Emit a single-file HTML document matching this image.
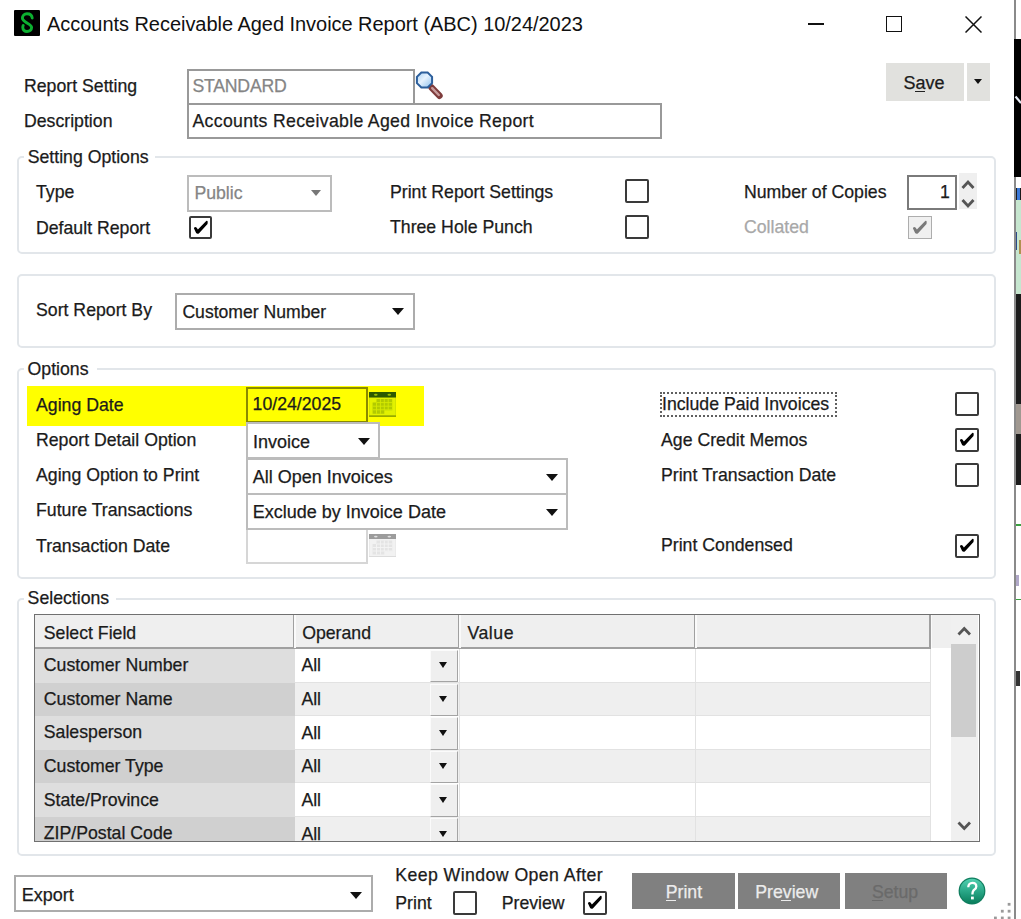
<!DOCTYPE html>
<html><head><meta charset="utf-8">
<style>
html,body{margin:0;padding:0;}
body{width:1021px;height:919px;position:relative;overflow:hidden;background:#fff;font-family:"Liberation Sans",sans-serif;}
.a{position:absolute;}
.t{position:absolute;font-size:17.7px;line-height:18px;white-space:nowrap;color:#1b1b1b;-webkit-text-stroke:0.25px currentColor;}
.g{position:absolute;border:2px solid #e2e6ea;border-radius:5px;box-sizing:border-box;}
.lg{position:absolute;background:#fff;height:20px;}
.cb{position:absolute;width:24px;height:24px;box-sizing:border-box;border:2px solid #3a3a3a;border-radius:2px;background:#fff;}
.cb svg{position:absolute;left:-2px;top:-2px;}
.box{position:absolute;box-sizing:border-box;border:2px solid #999;background:#fff;}
.cmb{position:absolute;box-sizing:border-box;border:2px solid #bcbcbc;background:#fff;}
.arr{position:absolute;width:0;height:0;border-left:6px solid transparent;border-right:6px solid transparent;border-top:7px solid #111;}
.btn{position:absolute;background:#808080;}
</style></head><body>

<!-- background window at right -->
<div class="a" style="left:1014px;top:0;width:7px;height:919px;background:#fff;"></div>
<div class="a" style="left:1014px;top:39px;width:7px;height:137.5px;background:#000;"></div>
<svg class="a" style="left:1014px;top:90px;" width="7" height="20" viewBox="0 0 7 20"><path d="M1.5,6.5 L7,13" stroke="#e8eef8" stroke-width="2.2"/></svg>
<div class="a" style="left:1015px;top:188px;width:6px;height:12px;background:#1a1a1a;"></div>
<div class="a" style="left:1016.5px;top:188px;width:3px;height:12px;background:#3a78d8;"></div>
<div class="a" style="left:1015px;top:200px;width:6px;height:94px;background:#c6e6cf;"></div>
<div class="a" style="left:1015px;top:232px;width:2px;height:18px;background:#2a4a8a;"></div>
<div class="a" style="left:1019px;top:240px;width:2px;height:14px;background:#b09050;"></div>
<div class="a" style="left:1015px;top:294px;width:6px;height:191px;background:#1c1c1c;"></div>
<div class="a" style="left:1015px;top:404px;width:6px;height:30px;background:#a09890;"></div>
<div class="a" style="left:1015px;top:524px;width:6px;height:1.5px;background:#3aa040;"></div><div class="a" style="left:1015px;top:575px;width:4px;height:11px;background:#b0a8c8;"></div>
<div class="a" style="left:1015px;top:598.5px;width:6px;height:1.5px;background:#3aa040;"></div>
<div class="a" style="left:1015px;top:671px;width:5px;height:15px;background:#333;"></div>
<div class="a" style="left:1014px;top:0;width:1.5px;height:39px;background:#8a8a8a;"></div><div class="a" style="left:1014px;top:176.5px;width:1.5px;height:742.5px;background:#8a8a8a;"></div>

<!-- title bar -->
<div class="a" style="left:14px;top:10px;width:26px;height:26px;background:#000;border-radius:1px;"></div>
<svg class="a" style="left:14px;top:10px;" width="26" height="26" viewBox="0 0 26 26"><path d="M18.2,8 C18,5.3 15.8,3.7 13,3.7 C10.3,3.7 8.4,5.6 8.4,8.1 C8.4,10.5 10.5,11.6 13,13 C16,14.6 17.6,15.8 17.6,17.6 C17.6,20 15.6,21.5 13,21.5 C10.5,21.5 8.8,19.8 8.8,17.6 C8.8,16.6 8.9,15.9 9.2,15.4" fill="none" stroke="#0cb030" stroke-width="2.9" stroke-linecap="round"/></svg>
<div class="t" style="left:47px;top:14px;font-size:20px;line-height:20px;color:#111;letter-spacing:-0.04px;-webkit-text-stroke:0;">Accounts Receivable Aged Invoice Report (ABC) 10/24/2023</div>
<div class="a" style="left:808px;top:23px;width:16px;height:1.5px;background:#111;"></div>
<div class="a" style="left:886px;top:16px;width:16px;height:16px;box-sizing:border-box;border:1.5px solid #111;"></div>
<svg class="a" style="left:965px;top:16px;" width="17" height="17" viewBox="0 0 17 17"><path d="M0.5,0.5 L16.5,16.5 M16.5,0.5 L0.5,16.5" stroke="#111" stroke-width="1.5"/></svg>

<!-- report setting -->
<div class="t" style="left:24px;top:76.6px;">Report Setting</div>
<div class="t" style="left:24px;top:112.1px;">Description</div>
<div class="box" style="left:187px;top:69px;width:228px;height:36px;"></div>
<div class="box" style="left:187px;top:103px;width:475px;height:36px;"></div>
<div class="t" style="left:192.5px;top:76.9px;color:#858585;letter-spacing:-0.25px;">STANDARD</div>
<div class="t" style="left:192.5px;top:112.4px;letter-spacing:0.31px;">Accounts Receivable Aged Invoice Report</div>
<svg class="a" style="left:414px;top:70px;" width="30" height="30" viewBox="0 0 30 30">
 <defs><linearGradient id="lens" x1="0" y1="0" x2="1" y2="1"><stop offset="0" stop-color="#a8d0f4"/><stop offset="0.45" stop-color="#e6f2fe"/><stop offset="1" stop-color="#8cc0ee"/></linearGradient></defs>
 <path d="M17.5,17.5 L25.5,25.8" stroke="#7e3c3c" stroke-width="6.4" stroke-linecap="round"/>
 <path d="M18.2,18.2 L24.8,25" stroke="#c89c9c" stroke-width="2.4" stroke-linecap="round"/>
 <polygon points="18.08,13.14 13.64,17.58 7.36,17.58 2.92,13.14 2.92,6.86 7.36,2.42 13.64,2.42 18.08,6.86" fill="url(#lens)" stroke="#2c5f9c" stroke-width="2"/>
</svg>

<!-- Save button -->
<div class="a" style="left:885.5px;top:62.5px;width:78px;height:38px;background:#e1e1de;"></div>
<div class="a" style="left:967px;top:62.5px;width:23px;height:38px;background:#e1e1de;"></div>
<div class="t" style="left:903.5px;top:73.5px;font-size:18px;color:#1b1b1b;">Save</div>
<div class="a" style="left:914.5px;top:90.5px;width:10.5px;height:1.5px;background:#222;"></div>
<div class="arr" style="left:973.5px;top:78.5px;border-left-width:4.7px;border-right-width:4.7px;border-top-width:5px;"></div>

<!-- Setting Options group -->
<div class="g" style="left:17px;top:156px;width:978.6px;height:98px;"></div>
<div class="lg" style="left:24px;top:146px;width:131px;"></div>
<div class="t" style="left:27.7px;top:147.5px;">Setting Options</div>
<div class="t" style="left:36px;top:182.7px;">Type</div>
<div class="t" style="left:36px;top:218.6px;">Default Report</div>
<div class="cmb" style="left:187px;top:175px;width:145px;height:37px;"></div>
<div class="t" style="left:194.4px;top:184.4px;color:#858585;">Public</div>
<div class="arr" style="left:310.5px;top:189.5px;border-top-color:#777;border-left-width:5.7px;border-right-width:5.7px;border-top-width:6.7px;"></div>
<div class="cb" style="left:189px;top:215.5px;width:23px;height:23px;"><svg width="24" height="24" viewBox="0 0 24 24"><path d="M4.9,12.2 Q5.9,10.4 7.5,11.6 L8.9,13.5 L17.2,4.9 Q18.7,4.4 18.7,6.1 L18.5,8 L10.3,16.9 Q8.6,18.7 7.1,17 Z" fill="#000"/></svg></div>
<div class="t" style="left:390px;top:182.9px;">Print Report Settings</div>
<div class="t" style="left:390px;top:217.9px;">Three Hole Punch</div>
<div class="cb" style="left:625px;top:179.4px;"></div>
<div class="cb" style="left:625px;top:215px;"></div>
<div class="t" style="left:744px;top:182.9px;">Number of Copies</div>
<div class="t" style="left:744px;top:217.9px;color:#a8a8a8;">Collated</div>
<div class="a" style="left:906.5px;top:174.5px;width:50.5px;height:35px;box-sizing:border-box;border:2px solid #7a7a7a;background:#fff;"></div>
<div class="t" style="left:940px;top:183px;">1</div>
<div class="a" style="left:959px;top:172.5px;width:18px;height:36px;background:#efefef;"></div>
<svg class="a" style="left:959px;top:172.5px;" width="18" height="36" viewBox="0 0 18 36"><path d="M3.5,15 L9,9 L14.5,15 M3.5,27 L9,33 L14.5,27" fill="none" stroke="#555" stroke-width="2.8"/></svg>
<div class="a" style="left:908px;top:215.5px;width:24px;height:23px;box-sizing:border-box;border:1.8px solid #adadad;background:#f0f0f0;"></div>
<svg class="a" style="left:908px;top:215.5px;" width="24" height="24" viewBox="0 0 24 24"><path d="M4.9,12.2 Q5.9,10.4 7.5,11.6 L8.9,13.5 L17.2,4.9 Q18.7,4.4 18.7,6.1 L18.5,8 L10.3,16.9 Q8.6,18.7 7.1,17 Z" fill="#7a7a7a"/></svg>

<!-- Sort group -->
<div class="g" style="left:17px;top:274px;width:978.6px;height:74px;"></div>
<div class="t" style="left:36px;top:301.2px;">Sort Report By</div>
<div class="cmb" style="left:174.5px;top:292.5px;width:240px;height:37px;border-color:#acacac;"></div>
<div class="t" style="left:182.4px;top:302.8px;font-size:17.6px;">Customer Number</div>
<div class="arr" style="left:392px;top:308px;"></div>

<!-- Options group -->
<div class="g" style="left:17px;top:368px;width:978.6px;height:211px;"></div>
<div class="lg" style="left:24px;top:359px;width:73px;"></div>
<div class="t" style="left:27.6px;top:359.6px;">Options</div>
<div class="a" style="left:27px;top:385.5px;width:397px;height:40px;background:#ffff00;"></div>
<div class="t" style="left:36px;top:395.5px;">Aging Date</div>
<div class="a" style="left:246px;top:387px;width:122px;height:36px;box-sizing:border-box;border:2px solid #8a8a00;"></div>
<div class="t" style="left:252.6px;top:395.3px;">10/24/2025</div>
<svg class="a" style="left:369px;top:392px;" width="27" height="25" viewBox="0 0 27 25">
 <rect x="0" y="0" width="27" height="25" fill="#cfe000"/>
 <rect x="0.8" y="5.5" width="25.4" height="18" fill="#e2f200"/>
 <rect x="0" y="0" width="27" height="5.5" fill="#2c5a00"/>
 <ellipse cx="6.8" cy="2.8" rx="1.8" ry="1" fill="#9ac000"/><ellipse cx="20.3" cy="2.8" rx="1.8" ry="1" fill="#9ac000"/>
 <path d="M7.5,7 H23.2 V18.2 H15.3 V21.8 H3.6 V10.6 H7.5 Z" fill="#b2ca00"/>
 <path d="M7.5,10.6 V21.8 M11.4,7 V21.8 M15.3,7 V18.2 M19.2,7 V18.2 M3.6,14.2 H23.2 M3.6,17.8 H23.2 M7.5,10.6 H23.2" stroke="#d6ea00" stroke-width="0.9"/>
 <rect x="0" y="23.3" width="27" height="1.7" fill="#98aa00"/>
</svg>
<div class="t" style="left:36px;top:430.8px;">Report Detail Option</div>
<div class="cmb" style="left:246px;top:421.5px;width:134px;height:37.5px;"></div>
<div class="t" style="left:253px;top:432.5px;font-size:18px;">Invoice</div>
<div class="arr" style="left:357.5px;top:437.5px;"></div>
<div class="t" style="left:36px;top:465.5px;">Aging Option to Print</div>
<div class="cmb" style="left:246px;top:457.5px;width:322px;height:37.5px;"></div>
<div class="t" style="left:252.8px;top:467.5px;font-size:18px;">All Open Invoices</div>
<div class="arr" style="left:545.5px;top:474px;"></div>
<div class="t" style="left:36px;top:501.3px;">Future Transactions</div>
<div class="cmb" style="left:246px;top:492.9px;width:322px;height:37.6px;"></div>
<div class="t" style="left:252.8px;top:502.8px;font-size:18px;">Exclude by Invoice Date</div>
<div class="arr" style="left:545.5px;top:509px;"></div>
<div class="t" style="left:36px;top:536.6px;">Transaction Date</div>
<div class="a" style="left:246px;top:530px;width:122px;height:34px;box-sizing:border-box;border:2px solid #d6d6d6;border-top:none;"></div>
<svg class="a" style="left:369px;top:533.5px;" width="27" height="23.5" viewBox="0 0 27 23.5">
 <rect x="0" y="0" width="27" height="23.5" fill="#e9e9e9"/>
 <rect x="0.8" y="5" width="25.4" height="17" fill="#f2f2f2"/>
 <rect x="0" y="0" width="27" height="5" fill="#9c9c9c"/>
 <ellipse cx="6.8" cy="2.6" rx="1.8" ry="0.9" fill="#e0e0e0"/><ellipse cx="20.3" cy="2.6" rx="1.8" ry="0.9" fill="#e0e0e0"/>
 <path d="M7.5,6.5 H23.2 V17.2 H15.3 V20.5 H3.6 V10 H7.5 Z" fill="#e4e4e4"/>
 <path d="M7.5,10 V20.5 M11.4,6.5 V20.5 M15.3,6.5 V17.2 M19.2,6.5 V17.2 M3.6,13.5 H23.2 M3.6,17 H23.2 M7.5,10 H23.2" stroke="#f4f4f4" stroke-width="0.9"/>
 <rect x="0" y="22" width="27" height="1.5" fill="#dcdcdc"/>
</svg>
<div class="a" style="left:659.5px;top:391.5px;width:177px;height:25px;box-sizing:border-box;border:2px dotted #606060;"></div>
<div class="t" style="left:662px;top:395.4px;">Include Paid Invoices</div>
<div class="t" style="left:661px;top:430.5px;">Age Credit Memos</div>
<div class="t" style="left:661px;top:465.7px;">Print Transaction Date</div>
<div class="t" style="left:661px;top:535.7px;">Print Condensed</div>
<div class="cb" style="left:955px;top:392px;"></div>
<div class="cb" style="left:955px;top:427.5px;"><svg width="24" height="24" viewBox="0 0 24 24"><path d="M4.9,12.2 Q5.9,10.4 7.5,11.6 L8.9,13.5 L17.2,4.9 Q18.7,4.4 18.7,6.1 L18.5,8 L10.3,16.9 Q8.6,18.7 7.1,17 Z" fill="#000"/></svg></div>
<div class="cb" style="left:955px;top:463px;"></div>
<div class="cb" style="left:955px;top:534px;"><svg width="24" height="24" viewBox="0 0 24 24"><path d="M4.9,12.2 Q5.9,10.4 7.5,11.6 L8.9,13.5 L17.2,4.9 Q18.7,4.4 18.7,6.1 L18.5,8 L10.3,16.9 Q8.6,18.7 7.1,17 Z" fill="#000"/></svg></div>

<!-- Selections group -->
<div class="g" style="left:17px;top:598px;width:978.6px;height:258px;"></div>
<div class="lg" style="left:24px;top:589px;width:92px;"></div>
<div class="t" style="left:27.6px;top:589px;">Selections</div>
<!--GRID-->
<div class="a" style="left:34px;top:614.4px;width:946.40px;height:227.60px;box-sizing:border-box;border:1.6px solid #707070;overflow:hidden;background:#fff;">
<div class="a" style="left:0.00px;top:0.00px;width:917.00px;height:33.00px;background:#efefef;"></div>
<div class="a" style="left:0.00px;top:32.00px;width:896.00px;height:1.60px;background:#a0a0a0;"></div>
<div class="a" style="left:257.50px;top:0.00px;width:1.50px;height:33.00px;background:#a0a0a0;"></div>
<div class="a" style="left:259.00px;top:0.00px;width:1.50px;height:33.00px;background:#fafafa;"></div>
<div class="a" style="left:422.50px;top:0.00px;width:1.50px;height:33.00px;background:#a0a0a0;"></div>
<div class="a" style="left:424.00px;top:0.00px;width:1.50px;height:33.00px;background:#fafafa;"></div>
<div class="a" style="left:658.50px;top:0.00px;width:1.50px;height:33.00px;background:#a0a0a0;"></div>
<div class="a" style="left:660.00px;top:0.00px;width:1.50px;height:33.00px;background:#fafafa;"></div>
<div class="a" style="left:894.30px;top:0.00px;width:1.50px;height:33.00px;background:#a0a0a0;"></div>
<div class="a" style="left:895.80px;top:0.00px;width:1.50px;height:33.00px;background:#fafafa;"></div>
<div class="t" style="left:8.80px;top:8.60px;">Select Field</div>
<div class="t" style="left:267.20px;top:8.20px;">Operand</div>
<div class="t" style="left:432.40px;top:8.20px;letter-spacing:0.55px;">Value</div>
<div class="a" style="left:0.00px;top:33.50px;width:259.70px;height:33.65px;background:#dedede;"></div>
<div class="a" style="left:259.70px;top:33.50px;width:636.00px;height:33.65px;background:#ffffff;"></div>
<div class="a" style="left:259.70px;top:66.15px;width:636.00px;height:1.00px;background:#e2e2e2;"></div>
<div class="a" style="left:394.70px;top:34.50px;width:28.00px;height:32.45px;background:#efefef;border-left:1px solid #fbfbfb;border-top:1px solid #fbfbfb;border-right:1.6px solid #a4a4a4;border-bottom:1.6px solid #a4a4a4;box-sizing:border-box;"></div>
<div class="arr" style="left:403.60px;top:47.00px;border-left-width:4.6px;border-right-width:4.6px;border-top-width:6px;"></div>
<div class="t" style="left:8.80px;top:40.80px;">Customer Number</div>
<div class="t" style="left:266.40px;top:40.90px;">All</div>
<div class="a" style="left:0.00px;top:67.15px;width:259.70px;height:33.65px;background:#d0d0d0;"></div>
<div class="a" style="left:259.70px;top:67.15px;width:636.00px;height:33.65px;background:#efefef;"></div>
<div class="a" style="left:259.70px;top:99.80px;width:636.00px;height:1.00px;background:#e2e2e2;"></div>
<div class="a" style="left:394.70px;top:68.15px;width:28.00px;height:32.45px;background:#efefef;border-left:1px solid #fbfbfb;border-top:1px solid #fbfbfb;border-right:1.6px solid #a4a4a4;border-bottom:1.6px solid #a4a4a4;box-sizing:border-box;"></div>
<div class="arr" style="left:403.60px;top:80.65px;border-left-width:4.6px;border-right-width:4.6px;border-top-width:6px;"></div>
<div class="t" style="left:8.80px;top:74.45px;">Customer Name</div>
<div class="t" style="left:266.40px;top:74.55px;">All</div>
<div class="a" style="left:0.00px;top:100.80px;width:259.70px;height:33.65px;background:#dedede;"></div>
<div class="a" style="left:259.70px;top:100.80px;width:636.00px;height:33.65px;background:#ffffff;"></div>
<div class="a" style="left:259.70px;top:133.45px;width:636.00px;height:1.00px;background:#e2e2e2;"></div>
<div class="a" style="left:394.70px;top:101.80px;width:28.00px;height:32.45px;background:#efefef;border-left:1px solid #fbfbfb;border-top:1px solid #fbfbfb;border-right:1.6px solid #a4a4a4;border-bottom:1.6px solid #a4a4a4;box-sizing:border-box;"></div>
<div class="arr" style="left:403.60px;top:114.30px;border-left-width:4.6px;border-right-width:4.6px;border-top-width:6px;"></div>
<div class="t" style="left:8.80px;top:108.10px;">Salesperson</div>
<div class="t" style="left:266.40px;top:108.20px;">All</div>
<div class="a" style="left:0.00px;top:134.45px;width:259.70px;height:33.65px;background:#d0d0d0;"></div>
<div class="a" style="left:259.70px;top:134.45px;width:636.00px;height:33.65px;background:#efefef;"></div>
<div class="a" style="left:259.70px;top:167.10px;width:636.00px;height:1.00px;background:#e2e2e2;"></div>
<div class="a" style="left:394.70px;top:135.45px;width:28.00px;height:32.45px;background:#efefef;border-left:1px solid #fbfbfb;border-top:1px solid #fbfbfb;border-right:1.6px solid #a4a4a4;border-bottom:1.6px solid #a4a4a4;box-sizing:border-box;"></div>
<div class="arr" style="left:403.60px;top:147.95px;border-left-width:4.6px;border-right-width:4.6px;border-top-width:6px;"></div>
<div class="t" style="left:8.80px;top:141.75px;">Customer Type</div>
<div class="t" style="left:266.40px;top:141.85px;">All</div>
<div class="a" style="left:0.00px;top:168.10px;width:259.70px;height:33.65px;background:#dedede;"></div>
<div class="a" style="left:259.70px;top:168.10px;width:636.00px;height:33.65px;background:#ffffff;"></div>
<div class="a" style="left:259.70px;top:200.75px;width:636.00px;height:1.00px;background:#e2e2e2;"></div>
<div class="a" style="left:394.70px;top:169.10px;width:28.00px;height:32.45px;background:#efefef;border-left:1px solid #fbfbfb;border-top:1px solid #fbfbfb;border-right:1.6px solid #a4a4a4;border-bottom:1.6px solid #a4a4a4;box-sizing:border-box;"></div>
<div class="arr" style="left:403.60px;top:181.60px;border-left-width:4.6px;border-right-width:4.6px;border-top-width:6px;"></div>
<div class="t" style="left:8.80px;top:175.40px;">State/Province</div>
<div class="t" style="left:266.40px;top:175.50px;">All</div>
<div class="a" style="left:0.00px;top:201.75px;width:259.70px;height:33.65px;background:#d0d0d0;"></div>
<div class="a" style="left:259.70px;top:201.75px;width:636.00px;height:33.65px;background:#efefef;"></div>
<div class="a" style="left:259.70px;top:234.40px;width:636.00px;height:1.00px;background:#e2e2e2;"></div>
<div class="a" style="left:394.70px;top:202.75px;width:28.00px;height:32.45px;background:#efefef;border-left:1px solid #fbfbfb;border-top:1px solid #fbfbfb;border-right:1.6px solid #a4a4a4;border-bottom:1.6px solid #a4a4a4;box-sizing:border-box;"></div>
<div class="arr" style="left:403.60px;top:215.25px;border-left-width:4.6px;border-right-width:4.6px;border-top-width:6px;"></div>
<div class="t" style="left:8.80px;top:209.05px;">ZIP/Postal Code</div>
<div class="t" style="left:266.40px;top:209.15px;">All</div>
<div class="a" style="left:423.90px;top:33.50px;width:1.00px;height:220.00px;background:#e2e2e2;"></div>
<div class="a" style="left:659.90px;top:33.50px;width:1.00px;height:220.00px;background:#e2e2e2;"></div>
<div class="a" style="left:895.40px;top:33.50px;width:1.00px;height:220.00px;background:#e2e2e2;"></div>
<div class="a" style="left:896.40px;top:33.50px;width:20.00px;height:220.00px;background:#fff;"></div>
<div class="a" style="left:916.40px;top:0.00px;width:26.50px;height:226.00px;background:#f0f0f0;"></div>
<div class="a" style="left:916.40px;top:29.00px;width:24.50px;height:92.50px;background:#cdcdcd;"></div>
<svg class="a" style="left:916.40px;top:0.00px;" width="26.5" height="225" viewBox="0 0 26.5 225"><path d="M7.5,19.5 L13.25,13.5 L19,19.5 M7.5,207.5 L13.25,213.5 L19,207.5" fill="none" stroke="#555" stroke-width="2.8"/></svg>
</div>
<!--/GRID-->

<!-- bottom -->
<div class="cmb" style="left:14.4px;top:875px;width:358.6px;height:37.4px;border-color:#acacac;"></div>
<div class="t" style="left:21.7px;top:885.8px;font-size:18px;">Export</div>
<div class="arr" style="left:349.5px;top:891.5px;"></div>
<div class="t" style="left:395.3px;top:865.8px;letter-spacing:0.42px;">Keep Window Open After</div>
<div class="t" style="left:395.3px;top:893.8px;">Print</div>
<div class="t" style="left:501.7px;top:893.8px;">Preview</div>
<div class="cb" style="left:453px;top:891px;"></div>
<div class="cb" style="left:583px;top:891px;"><svg width="24" height="24" viewBox="0 0 24 24"><path d="M4.9,12.2 Q5.9,10.4 7.5,11.6 L8.9,13.5 L17.2,4.9 Q18.7,4.4 18.7,6.1 L18.5,8 L10.3,16.9 Q8.6,18.7 7.1,17 Z" fill="#000"/></svg></div>
<div class="btn" style="left:632px;top:873px;width:102.5px;height:36px;"></div>
<div class="btn" style="left:738px;top:873px;width:102px;height:36px;"></div>
<div class="btn" style="left:844.5px;top:873px;width:102.5px;height:36px;"></div>
<div class="t" style="left:665.7px;top:883px;color:#ececec;">Print</div>
<div class="a" style="left:665.7px;top:899.5px;width:10px;height:1.5px;background:#ececec;"></div>
<div class="t" style="left:755.3px;top:883px;color:#ececec;">Preview</div>
<div class="a" style="left:781px;top:899.5px;width:10px;height:1.5px;background:#ececec;"></div>
<div class="t" style="left:871.9px;top:883px;color:#6a6a6a;">Setup</div>
<div class="a" style="left:871.9px;top:899.5px;width:11px;height:1.5px;background:#6a6a6a;"></div>
<svg class="a" style="left:958px;top:876.5px;" width="28" height="28" viewBox="0 0 28 28">
 <defs><linearGradient id="hg" x1="0" y1="0" x2="0" y2="1"><stop offset="0" stop-color="#52d0b0"/><stop offset="0.5" stop-color="#2aa888"/><stop offset="1" stop-color="#0a7e5c"/></linearGradient></defs>
 <circle cx="14" cy="14" r="13.4" fill="#0f7d5e"/>
 <circle cx="14" cy="14" r="12.2" fill="url(#hg)"/>
 <path d="M10.3,10.2 C10.3,7.4 12,5.8 14.4,5.8 C16.8,5.8 18.3,7.3 18.3,9.4 C18.3,11.6 16.5,12.4 15.4,13.6 C14.6,14.5 14.4,15.3 14.4,17.4" fill="none" stroke="#fff" stroke-width="2.3"/>
 <rect x="13" y="19.6" width="2.8" height="2.8" fill="#fff"/>
</svg>
<svg class="a" style="left:990px;top:900px;" width="24" height="19" viewBox="0 0 24 19"><g fill="#9a9a9a"><rect x="17.7" y="2.9" width="2.8" height="2.8"/><rect x="10.9" y="9.8" width="2.8" height="2.8"/><rect x="17.7" y="9.8" width="2.8" height="2.8"/><rect x="4.0" y="16.6" width="2.8" height="2.8"/><rect x="10.9" y="16.6" width="2.8" height="2.8"/><rect x="17.7" y="16.6" width="2.8" height="2.8"/></g></svg>
</body></html>
